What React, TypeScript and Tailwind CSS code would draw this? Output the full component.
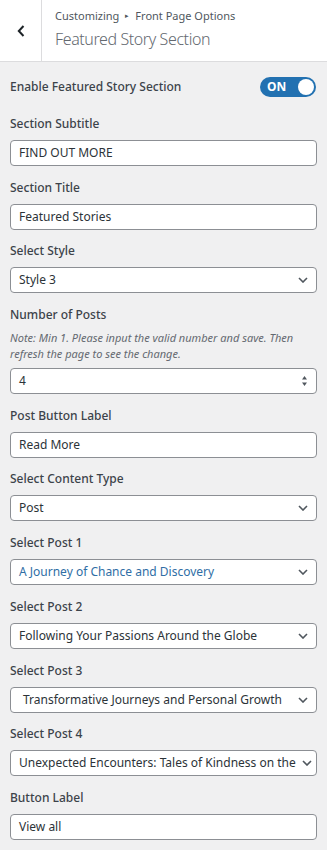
import React from 'react';

const font = { fontFamily: '"Noto Sans", "Open Sans", sans-serif' };

const Chevron = () => (
  <svg width="10" height="6" viewBox="0 0 10 6" className="shrink-0">
    <path d="M1 1l4 4 4-4" fill="none" stroke="#50575e" strokeWidth="1.6" />
  </svg>
);

const Label = ({ children }: { children: React.ReactNode }) => (
  <div className="h-[20px] text-[12px] leading-[20px] font-medium text-[#3c434a]">{children}</div>
);

const TextBox = ({ value }: { value: string }) => (
  <div className="mt-[6px] h-[26px] bg-white border border-[#8c8f94] rounded-[4px] pl-[8px] flex items-center text-[12px] text-[#2c3338]">
    {value}
  </div>
);

const SelectBox = ({ value, blue, indent }: { value: string; blue?: boolean; indent?: boolean }) => (
  <div
    className={`mt-[6px] h-[26px] bg-white border border-[#8c8f94] rounded-[4px] ${indent ? 'pl-[12px]' : 'pl-[8px]'} pr-[8px] flex items-center justify-between text-[12px] ${blue ? 'text-[#2f6ea5]' : 'text-[#2c3338]'}`}
  >
    <span className="whitespace-nowrap">{value}</span>
    <span className="pl-[6px]"><Chevron /></span>
  </div>
);

const Field = ({ children }: { children: React.ReactNode }) => <div className="mb-[11.7px]">{children}</div>;

export default function App() {
  return (
    <div className="w-[327px] min-h-[850px] bg-[#f0f0f1]" style={font}>
      <div className="h-[62px] bg-white border-b border-[#dcdcde] flex">
        <div className="w-[42px] border-r border-[#dcdcde] flex items-center justify-center">
          <svg width="8" height="12" viewBox="0 0 8 12">
            <path d="M6.5 1L1.8 6l4.7 5" fill="none" stroke="#1d2327" strokeWidth="2" />
          </svg>
        </div>
        <div className="pl-[13px] pt-[6px]">
          <div className="text-[11px] leading-[20px] text-[#50575e] flex items-center">
            Customizing
            <span className="mx-[6px] text-[7px]">▸</span>
            Front Page Options
          </div>
          <div className="text-[16px] leading-[26px] font-light tracking-[-0.4px] text-[#646970]">Featured Story Section</div>
        </div>
      </div>

      <div className="px-[10px] pt-[15px]">
        <div className="h-[20px] flex items-center justify-between mb-[17px]">
          <span className="text-[12px] font-medium text-[#3c434a]">Enable Featured Story Section</span>
          <div className="w-[56px] h-[20px] rounded-full bg-[#2271b1] flex items-center justify-between pl-[7px] pr-[2px] mr-[1px]">
            <span className="text-[12px] font-bold text-white leading-none">ON</span>
            <span className="w-[16px] h-[16px] rounded-full bg-white" />
          </div>
        </div>

        <Field>
          <Label>Section Subtitle</Label>
          <TextBox value="FIND OUT MORE" />
        </Field>
        <Field>
          <Label>Section Title</Label>
          <TextBox value="Featured Stories" />
        </Field>
        <Field>
          <Label>Select Style</Label>
          <SelectBox value="Style 3" />
        </Field>
        <Field>
          <Label>Number of Posts</Label>
          <div className="mt-[5px] text-[11px] leading-[16px] italic text-[#646970]">
            Note: Min 1. Please input the valid number and save. Then refresh the page to see the change.
          </div>
          <div className="mt-[6px] h-[26px] bg-white border border-[#8c8f94] rounded-[4px] pl-[8px] pr-[8px] flex items-center justify-between text-[12px] text-[#2c3338]">
            <span>4</span>
            <svg width="7" height="14" viewBox="0 0 7 14">
              <path d="M3.5 2L6 5.5H1z" fill="#50575e" />
              <path d="M3.5 12L6 8.5H1z" fill="#50575e" />
            </svg>
          </div>
        </Field>
        <Field>
          <Label>Post Button Label</Label>
          <TextBox value="Read More" />
        </Field>
        <Field>
          <Label>Select Content Type</Label>
          <SelectBox value="Post" />
        </Field>
        <Field>
          <Label>Select Post 1</Label>
          <SelectBox value="A Journey of Chance and Discovery" blue />
        </Field>
        <Field>
          <Label>Select Post 2</Label>
          <SelectBox value="Following Your Passions Around the Globe" />
        </Field>
        <Field>
          <Label>Select Post 3</Label>
          <SelectBox value="Transformative Journeys and Personal Growth" indent />
        </Field>
        <Field>
          <Label>Select Post 4</Label>
          <SelectBox value="Unexpected Encounters: Tales of Kindness on the" />
        </Field>
        <Field>
          <Label>Button Label</Label>
          <TextBox value="View all" />
        </Field>
      </div>
    </div>
  );
}
